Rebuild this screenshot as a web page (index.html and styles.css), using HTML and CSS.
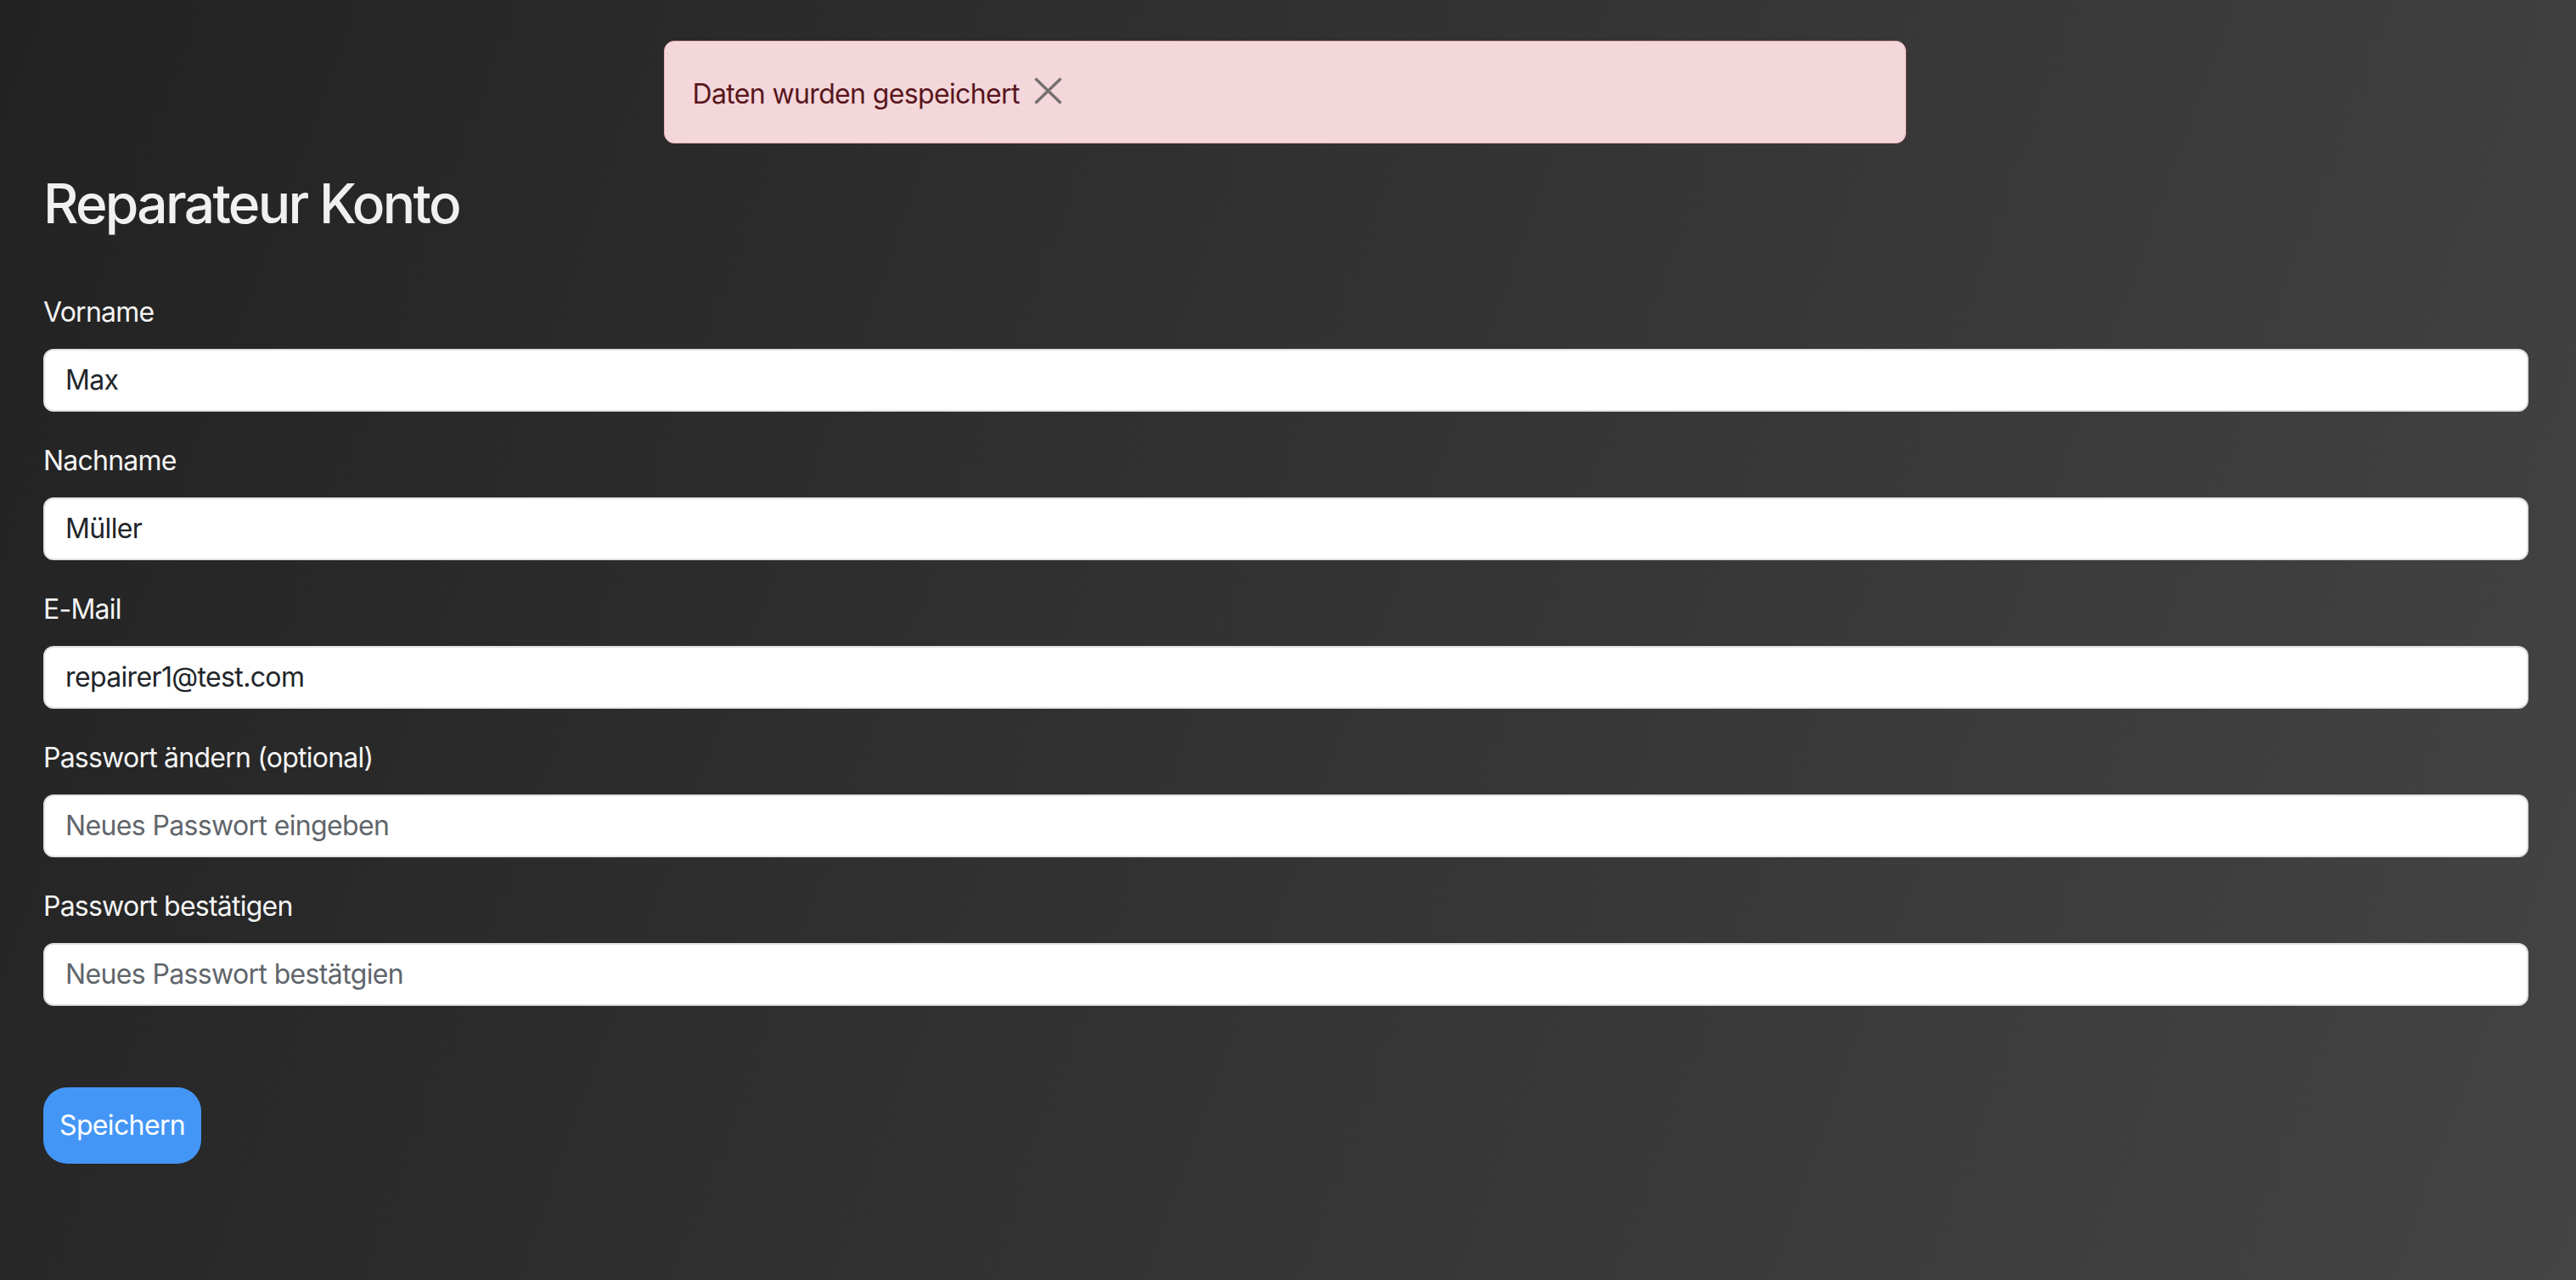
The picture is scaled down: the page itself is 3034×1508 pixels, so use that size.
FILE: index.html
```html
<!DOCTYPE html>
<html lang="de">
<head>
<meta charset="utf-8">
<title>Reparateur Konto</title>
<link rel="stylesheet" href="styles.css">
</head>
<body>
<div class="page">
  <div class="alert-wrap">
    <div class="alert">
      <span class="alert-text">Daten wurden gespeichert</span>
      <button class="alert-close" type="button" aria-label="Schließen">
        <svg width="33" height="32" viewBox="0 0 33 32"><path d="M1.5 1.5 L31.5 30.5 M31.5 1.5 L1.5 30.5" stroke="#767070" stroke-width="3.4" fill="none"/></svg>
      </button>
    </div>
  </div>
  <h1 class="title">Reparateur Konto</h1>
  <form class="form">
    <div class="group">
      <label class="label">Vorname</label>
      <input class="field" type="text" value="Max">
    </div>
    <div class="group">
      <label class="label">Nachname</label>
      <input class="field" type="text" value="Müller">
    </div>
    <div class="group">
      <label class="label">E-Mail</label>
      <input class="field" type="text" value="repairer1@test.com">
    </div>
    <div class="group">
      <label class="label">Passwort ändern (optional)</label>
      <input class="field" type="password" placeholder="Neues Passwort eingeben">
    </div>
    <div class="group">
      <label class="label">Passwort bestätigen</label>
      <input class="field" type="password" placeholder="Neues Passwort bestätgien">
    </div>
    <button class="save" type="button">Speichern</button>
  </form>
</div>
</body>
</html>
```
FILE: styles.css
```css
html, body {
  margin: 0;
  padding: 0;
}
body {
  min-height: 100vh;
  background: linear-gradient(110deg, #222222 0%, #444444 100%);
  font-family: Inter, "Noto Sans", sans-serif;
  color: #f3f3f3;
}
.page {
  padding: 48px 56px 0 51px;
  box-sizing: border-box;
  min-height: 100vh;
}
.alert-wrap {
  display: flex;
  justify-content: center;
  margin-left: -51px;
  margin-right: -56px;
  padding-right: 8px;
}
.alert {
  width: 1463px;
  height: 121px;
  box-sizing: border-box;
  background: #f3d7da;
  border: 1px solid #ebb1b7;
  border-radius: 12px;
  display: flex;
  align-items: center;
  padding: 4px 0 0 33px;
  color: #58151c;
  font-size: 32px;
  letter-spacing: -0.02em;
}
.alert-close {
  border: 0;
  background: transparent;
  padding: 0;
  margin-left: 17px;
  margin-bottom: 8px;
  display: flex;
  cursor: pointer;
}
.title {
  margin: 33px 0 0 0;
  font-size: 64px;
  font-weight: 500;
  line-height: 1.2;
  color: #f0f0f0;
  letter-spacing: -0.042em;
}
.form {
  margin-top: 65px;
  display: flex;
  flex-direction: column;
  align-items: flex-start;
}
.group {
  width: 100%;
  display: flex;
  flex-direction: column;
  margin-bottom: 34px;
}
.label {
  font-size: 32px;
  line-height: 48px;
  margin-bottom: 19px;
  color: #f5f5f5;
  letter-spacing: -0.024em;
}
.field {
  height: 74px;
  box-sizing: border-box;
  width: 100%;
  border: 2px solid #dee2e6;
  border-radius: 12px;
  background: #ffffff;
  padding: 0 24px;
  font-family: Inter, "Noto Sans", sans-serif;
  font-size: 32px;
  letter-spacing: -0.02em;
  color: #212529;
  outline: none;
}
.field::placeholder {
  color: #5f656b;
}
.save {
  margin-top: 62px;
  height: 90px;
  padding: 0 19px;
  border: 0;
  border-radius: 28px;
  background: #4496f6;
  color: #ffffff;
  font-family: Inter, "Noto Sans", sans-serif;
  font-size: 32px;
  letter-spacing: -0.02em;
  cursor: pointer;
}
```
